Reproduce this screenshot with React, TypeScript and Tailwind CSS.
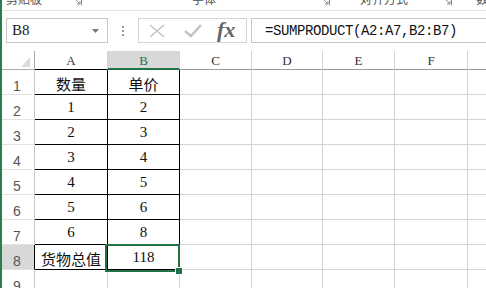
import React from "react";

const GRID = "border-[#d4d4d4]";

type Col = { l: string; w: string };
const cols: Col[] = [
  { l: "A", w: "w-[73px]" },
  { l: "B", w: "w-[72px]" },
  { l: "C", w: "w-[72px]" },
  { l: "D", w: "w-[71px]" },
  { l: "E", w: "w-[72px]" },
  { l: "F", w: "w-[73px]" },
  { l: "G", w: "w-[80px]" },
];

const data: [string, string][] = [
  ["数量", "单价"],
  ["1", "2"],
  ["2", "3"],
  ["3", "4"],
  ["4", "5"],
  ["5", "6"],
  ["6", "8"],
  ["货物总值", "118"],
  ["", ""],
];

const cellFont = "font-['Liberation_Serif','Noto_Sans_CJK_SC',serif]";

function Launcher({ ml }: { ml: string }) {
  return (
    <svg className={`${ml} shrink-0 -mt-[3px]`} width="9" height="9" viewBox="0 0 9 9">
      <path d="M0.5 0.5 H8.5 V8.5" fill="none" stroke="#8a8a8a" strokeWidth="1" />
      <path d="M3 3 L7 7 M7 4 V7 H4" fill="none" stroke="#8a8a8a" strokeWidth="1" />
    </svg>
  );
}

function TopStrip() {
  return (
    <div className="h-[11px] shrink-0 border-b border-[#e3e3e3] overflow-hidden flex items-start text-[12px] leading-[12px] text-[#555] font-['Noto_Sans_CJK_SC',sans-serif]">
      <span className="ml-[4px] -mt-[7px] shrink-0">剪贴板</span>
      <Launcher ml="ml-[31px]" />
      <span className="ml-[110px] -mt-[7px] shrink-0">字体</span>
      <Launcher ml="ml-[105px]" />
      <span className="ml-[30px] -mt-[7px] shrink-0">对齐方式</span>
      <Launcher ml="ml-[35px]" />
      <span className="ml-[24px] -mt-[7px] shrink-0">数</span>
    </div>
  );
}

function FormulaBar() {
  return (
    <div className="h-[40px] shrink-0 flex items-start pt-[7px]">
      <div className="ml-[4px] w-[102px] h-[25px] border border-[#c6c6c6] flex items-center justify-between pl-[5px] pr-[8px]">
        <span className="text-[15px] leading-none text-[#222] font-['Liberation_Serif',serif]">B8</span>
        <svg width="7" height="4" viewBox="0 0 7 4">
          <path d="M0 0 H7 L3.5 4 Z" fill="#777" />
        </svg>
      </div>
      <div className="w-[30px] h-[25px] flex flex-col items-center justify-center gap-[2px]">
        <div className="w-[2px] h-[2px] bg-[#9a9a9a]" />
        <div className="w-[2px] h-[2px] bg-[#9a9a9a]" />
        <div className="w-[2px] h-[2px] bg-[#9a9a9a]" />
      </div>
      <div className="w-[109px] h-[25px] border border-[#d4d4d4] flex items-center pl-[8px]">
        <svg width="20" height="14" viewBox="0 0 20 14">
          <path d="M3 1 L17 13 M17 1 L3 13" stroke="#c4c4c4" strokeWidth="1.6" fill="none" />
        </svg>
        <svg className="ml-[16px]" width="20" height="14" viewBox="0 0 20 14">
          <path d="M2 7 L8 12 L18 1" stroke="#c4c4c4" strokeWidth="2.6" fill="none" />
        </svg>
        <span className="ml-[14px] -mt-[2px] text-[22px] leading-none italic font-semibold text-[#666] font-['Liberation_Serif',serif]">fx</span>
      </div>
      <div className="ml-[4px] flex-1 h-[25px] border border-r-0 border-[#c6c6c6] flex items-center pl-[13px]">
        <span className="text-[14px] leading-none tracking-[-0.4px] text-[#111] font-['Liberation_Mono',monospace] whitespace-nowrap">
          =SUMPRODUCT(A2:A7,B2:B7)
        </span>
      </div>
    </div>
  );
}

function Grid() {
  return (
    <div className="relative flex flex-col">
      <div className="flex h-[19px] shrink-0">
        <div className="w-[33px] shrink-0 border-r border-b border-[#ababab] flex items-end justify-end pr-[4px] pb-[2px]">
          <svg width="9" height="10" viewBox="0 0 9 10">
            <path d="M9 0 V10 H0 Z" fill="#dcdcdc" />
          </svg>
        </div>
        {cols.map((c) => {
          const sel = c.l === "B";
          const blackBottom = c.l === "A";
          return (
            <div
              key={c.l}
              className={`${c.w} shrink-0 border-r ${GRID} flex items-end justify-center text-[13px] leading-none ${cellFont} ${
                sel
                  ? "bg-[#d8d8d8] text-[#217346] border-b-2 border-b-[#217346] pb-[1px]"
                  : blackBottom
                  ? "text-[#333] border-b border-b-black pb-[2px]"
                  : "text-[#333] border-b border-b-[#9b9b9b] pb-[2px]"
              }`}
            >
              {c.l}
            </div>
          );
        })}
      </div>
      {data.map((row, i) => {
        const r = i + 1;
        const inTable = r <= 8;
        const selRow = r === 8;
        return (
          <div key={r} className="flex h-[25px] shrink-0">
            <div
              className={`w-[33px] shrink-0 border-b border-b-[#e2e2e2] border-r ${
                selRow ? "border-r-black bg-[#d8d8d8]" : "border-r-[#c6c6c6]"
              } flex items-end justify-center pr-[2px] pb-[1px] text-[14px] leading-none text-[#555] font-['Liberation_Sans',sans-serif]`}
            >
              {r}
            </div>
            {cols.map((c, ci) => {
              const isData = inTable && ci < 2;
              const txt = ci < 2 ? row[ci] : "";
              const cjk = /[\u4e00-\u9fff]/.test(txt);
              return (
                <div
                  key={c.l}
                  className={`${c.w} shrink-0 border-r border-b ${
                    isData ? "border-black" : GRID
                  } flex items-center justify-center text-[#111] ${
                    cjk
                      ? "text-[15px] font-['Noto_Sans_CJK_SC',sans-serif] leading-none pt-[2px]"
                      : `text-[15px] ${cellFont} leading-none`
                  }`}
                >
                  {txt}
                </div>
              );
            })}
          </div>
        );
      })}
      <div className="absolute left-[103px] top-[193px] w-[75px] h-[28px] border-2 border-[#217346] pointer-events-none">
        <div className="absolute -right-[4px] -bottom-[4px] w-[6px] h-[6px] bg-[#217346] outline outline-1 outline-white" />
      </div>
    </div>
  );
}

export default function App() {
  return (
    <div className="w-[486px] h-[288px] overflow-hidden bg-white flex flex-col border-l-2 border-[#2f7a4f]">
      <TopStrip />
      <FormulaBar />
      <Grid />
    </div>
  );
}
